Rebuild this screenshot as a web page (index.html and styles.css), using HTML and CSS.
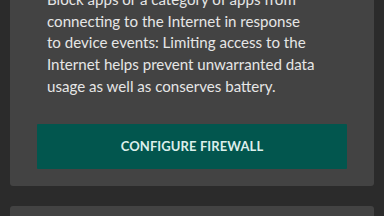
FILE: index.html
```html
<!DOCTYPE html>
<html lang="en">
<head>
    <meta charset="UTF-8">
    <title>Firewall</title>
    <link rel="stylesheet" href="styles.css">
</head>
<body>
    <!-- firewall card -->
    <div class="card">
        <p class="card-text">
            Block apps or a category of apps from<br>
            connecting to the Internet in response<br>
            to device events: Limiting access to the<br>
            Internet helps prevent unwarranted data<br>
            usage as well as conserves battery.
        </p>
        <button class="btn-action">CONFIGURE FIREWALL</button>
    </div>

    <!-- next card -->
    <div class="card card-next"></div>
</body>
</html>
```

FILE: styles.css
```css
body {
    margin: 0;
    background: #2b2b2b;
    font-family: 'Lato', 'Noto Sans', sans-serif;
    overflow: hidden;
}

.card {
    margin: -11px 10px 0;
    padding: 0 0 17px;
    background: #434343;
    border-radius: 3px;
}

.card-text {
    margin: 0;
    padding: 0 20px 0 37px;
    color: #e6e6e6;
    font-size: 15.1px;
    line-height: 21.7px;
    white-space: nowrap;
}

.btn-action {
    display: block;
    width: calc(100% - 54px);
    height: 45px;
    margin: 26px 27px 0;
    border: none;
    border-radius: 1px;
    background: #02564e;
    color: #dcefeb;
    font-family: 'Lato', 'Noto Sans', sans-serif;
    font-weight: bold;
    font-size: 13px;
    letter-spacing: 0.1px;
}

.card-next {
    margin-top: 20px;
    height: 60px;
}
```
